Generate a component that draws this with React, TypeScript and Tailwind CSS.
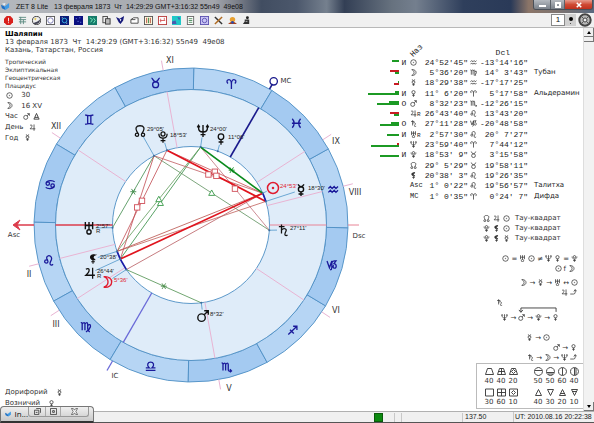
import type { ReactNode } from "react";

type GlyphName = keyof typeof glyphs;

const glyphs = {
  sun: (
    <>
      <circle cx="8" cy="8" r="6.3" />
      <circle cx="8" cy="8" r="0.6" />
    </>
  ),
  moon: <path d="M4 1.5C17 0 17 16 4 14.5C11 12 11 4 4 1.5z" />,
  mercury: (
    <>
      <circle cx="8" cy="7.2" r="3.2" />
      <path d="M4.3 1Q8 7 11.7 1M8 10.4V15.5M5 13h6" />
    </>
  ),
  venus: (
    <>
      <circle cx="8" cy="5" r="3.7" />
      <path d="M8 8.7V15.5M4.8 12h6.4" />
    </>
  ),
  mars: (
    <>
      <circle cx="6.2" cy="10" r="4.6" />
      <path d="M9.5 6.5L14.5 1.5M9.5 1.5h5v5" />
    </>
  ),
  jupiter: <path d="M2.5 3C7 0 9.5 5 2.5 11H14.5M11.5 1V15.5" />,
  saturn: <path d="M6 0.5V12.5M2.5 3.5h7.5M6 8C9 4.5 13.5 6.5 12 9.5C11 12 9.5 13 11 15Q12.5 16 14 14.5" />,
  uranus: (
    <>
      <path d="M3.5 0.5V9.5M12.5 0.5V9.5M3.5 5H12.5M8 0.5V10" />
      <circle cx="8" cy="12.8" r="2.6" />
    </>
  ),
  neptune: <path d="M2.5 2V4C2.5 11 13.5 11 13.5 4V2M1 3.5L2.5 1L4 3.5M12 3.5L13.5 1L15 3.5M8 0.5V15.5M5 12.5H11" />,
  pluto: (
    <>
      <circle cx="8" cy="4" r="2.7" />
      <path d="M2.5 3.5C2.5 11.5 13.5 11.5 13.5 3.5M8 9.5V15.5M4.8 12.7h6.4" />
    </>
  ),
  node: (
    <>
      <circle cx="4" cy="13" r="2.2" />
      <circle cx="12" cy="13" r="2.2" />
      <path d="M5.3 11C0.5 4 3 1 8 1C13 1 15.5 4 10.7 11" />
    </>
  ),
  lilith: (
    <>
      <path fill="currentColor" d="M11.5 1.5C1.5 -0.5 1.5 11 11.5 9C7 8 7 3 11.5 1.5z" />
      <path d="M8 9.5V15.5M5.2 12.5H11" />
    </>
  ),
  aries: <path d="M3 7C0 4 2 1.5 4.5 1.5C7 1.5 8 5 8 8V15M13 7C16 4 14 1.5 11.5 1.5C9 1.5 8 5 8 8" />,
  taurus: (
    <>
      <circle cx="8" cy="10.7" r="4.3" />
      <path d="M2 1C4.5 1.5 4 6.4 8 6.4C12 6.4 11.5 1.5 14 1" />
    </>
  ),
  gemini: <path d="M2 1Q8 3.5 14 1M2 15Q8 12.5 14 15M5.7 2V14M10.3 2V14" />,
  cancer: (
    <>
      <circle cx="4.5" cy="6.5" r="2.5" />
      <circle cx="11.5" cy="9.5" r="2.5" />
      <path d="M2.3 5.5C4 1 12 1.5 14.5 4M13.7 10.5C12 15 4 14.5 1.5 12" />
    </>
  ),
  leo: (
    <>
      <circle cx="4.3" cy="9.5" r="2.4" />
      <path d="M6.2 8C1 0 12 -1 12 5C12 9 8 11 10 14Q12 16 14 13.5" />
    </>
  ),
  virgo: <path d="M1 2Q3 1.5 3 4V13M3 4Q6.5 0 7 4V13M7 4Q10.5 0 11 4V11Q11 14 14 15.5M11 6Q15.5 3 15 8Q14 12 8.5 15.5" />,
  libra: <path d="M1 14.5H15M1 11H6.2C1.5 7 4 2.5 8 2.5C12 2.5 14.5 7 9.8 11H15" />,
  scorpio: <path d="M1 2Q3 1.5 3 4V13M3 4Q6 0 6.8 4V13M6.8 4Q10 0 10.6 4V12Q11 14.5 15 13.5M13 11L15.3 13.5L13 15.5" />,
  sagittarius: <path d="M1.5 14L14 2M8.5 2H14V7.5M4 7L9.5 12.5" />,
  capricorn: <path d="M1 1.5L4.5 11.5L8 1.5V11Q8 14 5.5 14.5M8 4Q9 1.5 12 1.5H14L11 5.5C15.5 6 15 12 12 12C9.5 12 9 9 11 8" />,
  aquarius: <path d="M1 6.5L4 3.5L6.5 6.5L9.5 3.5L12 6.5L15 3.5M1 12L4 9L6.5 12L9.5 9L12 12L15 9" />,
  pisces: <path d="M2 1.5Q7.5 8 2 14.5M14 1.5Q8.5 8 14 14.5M1.5 8H14.5" />,
  // arrow that turns up to the row above
  turn: <path d="M0.5 11.500H8Q12 11.500 12 7V1.500M8.500 5.500L12 1.500L15.500 5.500" />,
};

function Glyph({ name, className = "" }: { name: GlyphName; className?: string }) {
  return (
    <svg
      viewBox="0 0 16 16"
      className={`size-[7px] shrink-0 text-[#333] ${className}`}
      fill="none"
      stroke="currentColor"
      strokeWidth="1.7"
    >
      {glyphs[name]}
    </svg>
  );
}

/* ---------- chart ---------- */

const CX = 191;
const CY = 225;
const R_OUT = 157;
const R_BAND = 135.5;
const R_IN = 78.5;
const ASC = 121.006;

// ecliptic longitude -> point on a circle, ascendant on the left
function at(lon: number, r: number) {
  const a = ((180 + lon - ASC) * Math.PI) / 180;
  return { x: CX + r * Math.cos(a), y: CY - r * Math.sin(a) };
}

const signs: GlyphName[] = [
  "aries",
  "taurus",
  "gemini",
  "cancer",
  "leo",
  "virgo",
  "libra",
  "scorpio",
  "sagittarius",
  "capricorn",
  "aquarius",
  "pisces",
];

type Planet = { lon: number; x: number; y: number; deg?: string; retro?: boolean; red?: boolean; size?: number };

const planets: Partial<Record<GlyphName, Planet>> = {
  node: { lon: 59.09, x: 140, y: 131, deg: "29°05'" },
  pluto: { lon: 48.88, x: 163, y: 137, deg: "18°53'", size: 12 },
  neptune: { lon: 23.99, x: 203, y: 131, deg: "24°00'", size: 13 },
  venus: { lon: 11.1, x: 221, y: 139, deg: "11°06'" },
  sun: { lon: 324.88, x: 273, y: 188, deg: "24°53'", red: true, size: 14 },
  mercury: { lon: 318.49, x: 301, y: 190, deg: "18°30'", size: 13 },
  saturn: { lon: 297.19, x: 283, y: 230, deg: "27°11'", size: 12 },
  uranus: { lon: 122.96, x: 89, y: 228, deg: "2°57'", retro: true, size: 13 },
  lilith: { lon: 140.63, x: 93, y: 259, deg: "20°38'", size: 10 },
  jupiter: { lon: 146.73, x: 90, y: 273, deg: "26°44'", retro: true, size: 12 },
  moon: { lon: 155.6, x: 107, y: 282, deg: "5°36'", red: true, size: 13 },
  mars: { lon: 218.54, x: 203, y: 316, deg: "8°32'", size: 13 },
};

type Mark = "square" | "trine" | "sextile";

const aspects: [GlyphName, GlyphName, string, number, Mark?][] = [
  ["node", "uranus", "#3f8a4a", 1, "sextile"],
  ["neptune", "jupiter", "#2f8a3f", 1, "trine"],
  ["neptune", "lilith", "#5f9a5a", 1, "trine"],
  ["node", "saturn", "#5c8f5c", 1, "trine"],
  ["moon", "mars", "#4c8f4c", 1, "sextile"],
  ["neptune", "saturn", "#c0707a", 1, "square"],
  ["node", "jupiter", "#c04a50", 1, "square"],
  ["pluto", "lilith", "#c04a50", 1, "square"],
  ["node", "sun", "#c05a60", 1, "square"],
  ["pluto", "sun", "#c84a50", 1, "square"],
  ["lilith", "sun", "#b8504a", 1],
  ["lilith", "mercury", "#c0605a", 1],
  ["moon", "sun", "#b85a60", 1],
  ["neptune", "sun", "#0a8a1c", 2, "sextile"],
  ["pluto", "mercury", "#e0141e", 2, "square"],
  ["jupiter", "sun", "#e0141e", 2],
  ["lilith", "jupiter", "#1c1ca8", 2],
  ["jupiter", "moon", "#1c1ca8", 2],
  ["sun", "mercury", "#1c1ca8", 2],
];

const cusps = [
  { lon: 87.4, label: "XII", x: 56, y: 129 },
  { lon: 41.2, label: "XI", x: 170, y: 63 },
  { lon: 333.9, label: "IX", x: 336, y: 144 },
  { lon: 315.3, label: "VIII", x: 355, y: 195 },
  { lon: 267.4, label: "VI", x: 336, y: 313 },
  { lon: 221.2, label: "V", x: 229, y: 391 },
  { lon: 153.9, label: "III", x: 56, y: 327 },
  { lon: 135.3, label: "II", x: 29, y: 277 },
];

function sector(from: number) {
  const a = at(from, R_OUT);
  const b = at(from + 30, R_OUT);
  const c = at(from + 30, R_BAND);
  const d = at(from, R_BAND);
  return `M${a.x} ${a.y}A${R_OUT} ${R_OUT} 0 0 0 ${b.x} ${b.y}L${c.x} ${c.y}A${R_BAND} ${R_BAND} 0 0 1 ${d.x} ${d.y}z`;
}

function Ray({ lon, from, to, color, width = 1 }: { lon: number; from: number; to: number; color: string; width?: number }) {
  const a = at(lon, from);
  const b = at(lon, to);
  return <line x1={a.x} y1={a.y} x2={b.x} y2={b.y} stroke={color} strokeWidth={width} />;
}

function AspectMark({ kind, x, y, color }: { kind: Mark; x: number; y: number; color: string }) {
  if (kind === "square") {
    return <rect x={x - 2.7} y={y - 2.7} width="5.4" height="5.4" fill="#fff" stroke="#d0505a" strokeWidth="0.9" />;
  }
  if (kind === "trine") {
    return <path d={`M${x} ${y - 3}l3 5.4h-6z`} fill="#fff" stroke="#3a9a4a" strokeWidth="0.9" />;
  }
  return (
    <path
      d={`M${x - 3} ${y}h6M${x - 1.8} ${y - 2.8}l3.6 5.6M${x + 1.8} ${y - 2.8}l-3.6 5.6`}
      stroke={color}
      strokeWidth="0.9"
    />
  );
}

function NatalChart() {
  return (
    <svg
      role="img"
      aria-label="Шаляпин"
      viewBox="5 54 363 340"
      className="col-start-1 row-start-1 h-[340px] w-[363px] font-['DejaVu_Sans']"
      fill="none"
    >
      {signs.map((sign, i) => (
        <path key={sign} d={sector(i * 30)} fill={i % 2 ? "#a4caf1" : "#b6d5f4"} stroke="#4d8fc4" strokeWidth="0.9" />
      ))}
      <circle cx={CX} cy={CY} r={R_BAND} fill="#dfecf9" stroke="#4d8fc4" strokeWidth="0.9" />
      <circle cx={CX} cy={CY} r={R_IN} fill="#fff" stroke="#4d8fc4" strokeWidth="0.9" />

      {cusps.map(({ lon, label, x, y }) => (
        <g key={label}>
          <Ray lon={lon} from={R_IN} to={R_BAND} color="#e9b4d3" />
          <Ray lon={lon} from={R_OUT} to={167} color="#e9b4d3" />
          <text x={x} y={y} fontSize="8" textAnchor="middle" fill="#333">
            {label}
          </text>
        </g>
      ))}

      <path d="M14 225H34M55.5 225H112.5" stroke="#dc3c4c" strokeWidth="1.6" />
      <path d="M20 220L13 225L20 230L17 225z" fill="#dc3c4c" stroke="#dc3c4c" />
      <path d="M269.5 225H326.5M348 225H359" stroke="#e88496" strokeWidth="1" />
      <Ray lon={1.01} from={R_IN} to={R_BAND} color="#1a1a8c" width={1.6} />
      <Ray lon={1.01} from={R_OUT} to={163} color="#1a1a8c" width={1.6} />
      <circle cx="273.7" cy="81.3" r="3.7" stroke="#1a1a8c" strokeWidth="1.3" />
      <Ray lon={181.01} from={R_IN} to={R_BAND} color="#6a6ad8" width={1.3} />
      <Ray lon={181.01} from={R_OUT} to={168} color="#6a6ad8" width={1.3} />
      <g fontSize="7" fill="#333" textAnchor="middle">
        <text x="14" y="237">Asc</text>
        <text x="359" y="238">Dsc</text>
        <text x="286" y="83">MC</text>
        <text x="115" y="378">IC</text>
      </g>

      {signs.map((sign, i) => {
        const p = at(i * 30 + 15, 146.5);
        return (
          <g
            key={sign}
            transform={`translate(${p.x - 5.5} ${p.y - 5.5}) scale(0.69)`}
            stroke="#1a1a9a"
            strokeWidth="1.9"
          >
            {glyphs[sign]}
          </g>
        );
      })}

      {aspects.map(([from, to, color, width]) => {
        const a = at(planets[from]!.lon, R_IN);
        const b = at(planets[to]!.lon, R_IN);
        return (
          <line key={`${from}-${to}`} x1={a.x} y1={a.y} x2={b.x} y2={b.y} stroke={color} strokeWidth={width === 2 ? 1.7 : 0.8} />
        );
      })}
      {aspects.map(([from, to, color, , mark]) => {
        const a = at(planets[from]!.lon, R_IN);
        const b = at(planets[to]!.lon, R_IN);
        return mark && <AspectMark key={`${from}-${to}`} kind={mark} x={(a.x + b.x) / 2} y={(a.y + b.y) / 2} color={color} />;
      })}

      {Object.entries(planets).map(([name, p]) => {
        const a = at(p.lon, R_IN);
        const size = p.size ?? 12;
        const d = Math.hypot(p.x - a.x, p.y - a.y);
        const k = Math.max(0, (d - size / 2) / d);
        return (
          <g key={name}>
            <line x1={a.x} y1={a.y} x2={a.x + (p.x - a.x) * k} y2={a.y + (p.y - a.y) * k} stroke="#5f9fcf" strokeWidth="0.9" />
            <circle cx={a.x} cy={a.y} r="1" fill="#3b6ea0" />
            <g
              transform={`translate(${p.x - size / 2} ${p.y - size / 2}) scale(${size / 16})`}
              color={p.red ? "#e01c30" : "#111"}
              stroke="currentColor"
              strokeWidth="1.7"
            >
              {glyphs[name as GlyphName]}
            </g>
            <text x={p.x + 7} y={p.y} fontSize="6" className="font-['Liberation_Sans']" fill={p.red ? "#e01c30" : "#222"}>
              {p.deg}
            </text>
            {p.retro && (
              <text x={p.x + 7} y={p.y + 5} fontSize="6" className="font-['Liberation_Sans']" fill="#222">
                R
              </text>
            )}
          </g>
        );
      })}
    </svg>
  );
}

/* ---------- window chrome ---------- */

function TitleBar() {
  return (
    <header className="flex h-[13px] shrink-0 items-start bg-[linear-gradient(90deg,#b4b8bd_0%,#a2a5ab_36%,#7b7f89_40%,#414d61_44%,#4c586c_50%,#75808e_55%,#333f55_58%,#67727f_66%,#747f8e_70%,#2f3f5c_78%,#2a3a58_86%,#8b7568_89%,#7d7370_94%,#59697f_100%)] pr-px">
      <svg viewBox="0 0 10 10" className="mt-[2px] ml-px size-[9px] shrink-0">
        <path d="M0 3L4 5L5 9L1 7z" fill="#1d6fc4" />
        <path d="M4 5L9 1L9 6L5 9z" fill="#3f9be6" />
        <path d="M1 2L5 1L4 4z" fill="#e8f4ff" />
      </svg>
      <h1 className="ml-[6px] flex-1 whitespace-pre font-['Liberation_Sans',sans-serif] text-[7px] leading-[13px] text-[#111]">
        {"ZET 8 Lite   13 февраля 1873  Чт  14:29:29 GMT+3:16:32 55n49  49e08"}
      </h1>
      <div className="flex h-[10px] overflow-hidden rounded-b-[3px] border border-t-0 border-[#4a5058]">
        <button aria-label="Свернуть" className="flex w-[16px] items-end justify-center bg-gradient-to-b from-[#b5bac0] to-[#7b828b] pb-[2px]">
          <span className="h-[2px] w-[7px] bg-white" />
        </button>
        <button aria-label="Развернуть" className="flex w-[15px] items-center justify-center border-x border-[#5a6068] bg-gradient-to-b from-[#b5bac0] to-[#7b828b]">
          <span className="size-[6px] border-[2px] border-white" />
        </button>
        <button aria-label="Закрыть" className="flex w-[27px] items-center justify-center bg-gradient-to-b from-[#e59a8c] via-[#cf4a34] to-[#c0301c]">
          <svg viewBox="0 0 8 8" className="size-[6px]">
            <path d="M1 1L7 7M7 1L1 7" stroke="#fff" strokeWidth="2" />
          </svg>
        </button>
      </div>
    </header>
  );
}

const tools: { name: string; icon: ReactNode }[] = [
  { name: "Старт", icon: <><path d="M3 0H7L10 3V7L7 10H3L0 7V3z" fill="#d8201c" /><path d="M5 2V6M5 7V8" stroke="#fff" /></> },
  { name: "Список", icon: <path d="M1 1.5H9M1 4H9M1 6.5H9M3 1V9M6 4V9" stroke="#5b8a80" /> },
  { name: "Глобус", icon: <><circle cx="5" cy="5" r="4.5" fill="#eee" stroke="#333" /><path d="M1 8C4 10 9 9 9 4L6 6z" fill="#445" /><path d="M2 3L5 2L4 5z" fill="#e6c84a" /></> },
  { name: "Круг", icon: <><rect x="0.5" y="0.5" width="9" height="9" fill="#fff" stroke="#555" /><circle cx="5" cy="5" r="3" fill="none" stroke="#7777b0" /></> },
  { name: "Небо", icon: <><rect width="10" height="10" fill="#0a1c78" /><circle cx="5" cy="5" r="2.5" fill="none" stroke="#39b8e8" /><path d="M2 2h1M7 8h1" stroke="#fff" /></> },
  { name: "Звёзды", icon: <><rect width="10" height="10" fill="#0a0f80" /><path d="M2 3h1M6 2h1M4 6h1M7 7h1" stroke="#8ea8ff" /></> },
  { name: "Карта", icon: <><rect width="10" height="10" fill="#167a6a" /><path d="M2 2L5 4L3 7M6 2L8 5L6 8" stroke="#7af0c0" fill="none" /></> },
  { name: "Копия", icon: <><rect x="1" y="0.5" width="5" height="7" fill="#eee" stroke="#444" /><rect x="4" y="3" width="5" height="6" fill="#bbb" stroke="#333" /></> },
  { name: "Птица", icon: <><path d="M0 1L4 3L9 0L8 5L5 9L3 7z" fill="#15187a" /><path d="M4 3L6 4L5 6z" fill="#fff" /></> },
  { name: "Окно", icon: <path d="M1 4L4 2H9V8H1z M1 4H6" fill="#fff" stroke="#444" /> },
  { name: "Таблица", icon: <><rect x="0.5" y="0.5" width="9" height="9" fill="#fffbe0" stroke="#555" /><path d="M3 2V8M7 2V8" stroke="#b04030" /><path d="M5 2V8" stroke="#3a8a4a" /></> },
  { name: "График", icon: <><rect x="0.5" y="0.5" width="9" height="9" fill="#fff" stroke="#b83a3a" /><path d="M2 5H8M3 3V7M7 2V5" stroke="#d85a5a" /></> },
  { name: "Регионы", icon: <><rect width="10" height="10" fill="#20c8c8" /><path d="M0 6L4 5L5 9H0zM6 1L9 2L8 5z" fill="#4a5ab0" /></> },
  { name: "Текст", icon: <><rect x="1.5" y="0.5" width="7" height="9" fill="#fff" stroke="#666" /><path d="M3 3H7M3 5H7M3 7H7" stroke="#4a8a5a" /></> },
  { name: "Сетка", icon: <><rect x="0.5" y="0.5" width="9" height="9" fill="#c8c4f4" stroke="#5a50b0" /><circle cx="5" cy="5" r="2.5" fill="none" stroke="#5a50b0" /></> },
  { name: "Настройки", icon: <><path d="M1 1L9 9" stroke="#333" strokeWidth="1.6" /><path d="M9 1L1 9" stroke="#b06a20" strokeWidth="1.6" /></> },
  { name: "Лицо", icon: <><circle cx="5" cy="4" r="3" fill="#e8a030" /><path d="M0 9Q5 4 10 9z" fill="#a8401c" /><circle cx="5" cy="7" r="1.5" fill="#2a4ab0" /></> },
  { name: "Помощь", icon: <><circle cx="6" cy="2" r="1.6" fill="#222" /><path d="M3 4H8V9H1L3 6z" fill="#333" /><path d="M4 6H6" stroke="#bbb" /></> },
];

function Toolbar() {
  return (
    <div className="flex h-[15px] shrink-0 items-center border-b border-[#b8b8b8] bg-[#f0f0f0] pl-px">
      {tools.map(({ name, icon }) => (
        <button key={name} aria-label={name} className="flex w-[14px] justify-center">
          <svg viewBox="0 0 10 10" className="size-[9px]">
            {icon}
          </svg>
        </button>
      ))}
      <div className="ml-auto flex items-center">
        <input
          aria-label="Номер"
          defaultValue="1"
          className="h-[12px] w-[14px] border border-[#888] bg-white text-center font-['Liberation_Sans'] text-[8px] text-[#111]"
        />
        <button aria-label="Больше" className="flex h-[12px] w-[11px] flex-col items-center justify-center gap-[2px] bg-[#d0d0d0]">
          <span className="size-[4px] rounded-full bg-black" />
          <span className="size-px bg-[#555]" />
        </button>
        <button aria-label="Колесо" className="ml-[2px] mr-[2px]">
          <svg viewBox="0 0 14 14" className="size-[14px]">
            <circle cx="7" cy="7" r="5.7" fill="#b8b8b8" stroke="#444" strokeWidth="2" />
            <circle cx="7" cy="7" r="2" fill="#eee" stroke="#444" />
            <path d="M3 3L5.5 5.5M11 3L8.5 5.5M3 11L5.5 8.5M11 11L8.5 8.5" stroke="#555" />
          </svg>
        </button>
      </div>
    </div>
  );
}

function ScrollBar() {
  return (
    <div className="flex w-[11px] shrink-0 flex-col border-l border-[#ddd] bg-[#f2f2f2]">
      <button aria-label="Вверх" className="flex h-[9px] items-center justify-center border-r border-b border-[#777] bg-[#f0f0f0]">
        <span className="border-x-[2px] border-b-[3px] border-x-transparent border-b-black" />
      </button>
      <div className="h-[5px] border-r border-b border-[#777] bg-[#f0f0f0]" />
      <button aria-label="Вниз" className="mt-auto flex h-[9px] items-center justify-center border-r border-b border-[#777] bg-[#f0f0f0]">
        <span className="border-x-[2px] border-t-[3px] border-x-transparent border-t-black" />
      </button>
    </div>
  );
}

/* ---------- left text ---------- */

function ChartInfo() {
  return (
    <aside className="col-start-1 row-start-1 flex flex-col items-start pt-[4px] pb-[2px] text-[#333]">
      <ul className="text-[6px] leading-[8px]">
        <li>Тропический</li>
        <li>Эклиптикальная</li>
        <li>Геоцентрическая</li>
        <li>Плацидус</li>
      </ul>
      <ul className="grid h-[53px] grid-rows-5 text-[7px] leading-[10px]">
        <li className="flex items-center gap-[6px]"><Glyph name="sun" className="ml-px" /> 30</li>
        <li className="flex items-center gap-[6px]"><Glyph name="moon" className="ml-px" /> 16 XV</li>
        <li className="flex items-center gap-[3px]">
          Час <Glyph name="mars" />
          <svg viewBox="0 0 8 8" className="size-[7px]" fill="none" stroke="#333">
            <path d="M4 0.5L6 5H2zM1 7H7M2 5L1 7M6 5L7 7" />
          </svg>
        </li>
        <li className="flex items-center gap-[3px]">День <Glyph name="jupiter" /></li>
        <li className="flex items-center gap-[3px]">Год <Glyph name="mercury" /></li>
      </ul>
      <ul className="mt-auto text-[7px] leading-[11px]">
        <li className="flex items-center gap-[6px]">Дорифорий <Glyph name="mercury" /></li>
        <li className="flex items-center gap-[6px]">Возничий <Glyph name="venus" /></li>
      </ul>
    </aside>
  );
}

/* ---------- right text ---------- */

type Bar = [width: number, color: "g" | "r"];
type Row = {
  body: GlyphName | "Asc" | "MC";
  bars?: [Bar, Bar];
  flag?: string;
  retro?: boolean;
  lon: string;
  sign: GlyphName;
  dcl: string;
  star?: string;
};

const rows: Row[] = [
  { body: "sun", bars: [[7, "g"], [0, "g"]], flag: "И", lon: "24°52'45\"", sign: "aquarius", dcl: "-13°14'16\"" },
  { body: "moon", bars: [[9, "r"], [4, "g"]], lon: "5°36'20\"", sign: "virgo", dcl: "14° 3'43\"", star: "Тубан" },
  { body: "mercury", bars: [[1, "g"], [5, "r"]], lon: "18°29'38\"", sign: "aquarius", dcl: "-17°17'25\"" },
  { body: "venus", bars: [[4, "g"], [31, "g"]], flag: "И", lon: "11° 6'20\"", sign: "aries", dcl: "5°17'58\"", star: "Альдерамин" },
  { body: "mars", bars: [[10, "g"], [22, "g"]], flag: "О", lon: "8°32'23\"", sign: "scorpio", dcl: "-12°26'15\"" },
  { body: "jupiter", bars: [[9, "r"], [5, "g"]], retro: true, lon: "26°43'40\"", sign: "leo", dcl: "13°43'20\"" },
  { body: "saturn", bars: [[8, "g"], [19, "g"]], flag: "О", lon: "27°11'28\"", sign: "capricorn", dcl: "-20°48'58\"" },
  { body: "uranus", bars: [[0, "g"], [12, "g"]], flag: "И", retro: true, lon: "2°57'30\"", sign: "leo", dcl: "20° 7'27\"" },
  { body: "neptune", bars: [[2, "r"], [28, "g"]], lon: "23°59'40\"", sign: "aries", dcl: "7°44'12\"" },
  { body: "pluto", bars: [[0, "g"], [19, "g"]], flag: "И", lon: "18°53' 9\"", sign: "taurus", dcl: "3°15'58\"" },
  { body: "node", lon: "29° 5'29\"", sign: "taurus", dcl: "19°58'11\"" },
  { body: "lilith", lon: "20°38' 3\"", sign: "leo", dcl: "19°26'35\"" },
  { body: "Asc", lon: "1° 0'22\"", sign: "leo", dcl: "19°56'57\"", star: "Талитха" },
  { body: "MC", lon: "1° 0'35\"", sign: "aries", dcl: "0°24' 7\"", star: "Дифда" },
];

function Positions() {
  return (
    <table className="h-[162px] w-full table-fixed border-collapse whitespace-pre font-['Liberation_Mono',monospace] text-[8px] leading-[9px] text-[#222]">
      <colgroup>
        <col className="w-[35px]" />
        <col className="w-[10px]" />
        <col className="w-[13px]" />
        <col className="w-[46px]" />
        <col className="w-[10px]" />
        <col className="w-[50px]" />
        <col />
      </colgroup>
      <thead>
        <tr className="h-[14px]">
          <th />
          <th />
          <th className="p-0 text-left font-normal">
            <span className="inline-block -rotate-45">Наз</span>
          </th>
          <th />
          <th />
          <th className="p-0 pr-[18px] text-right align-bottom font-normal">Dcl</th>
          <th />
        </tr>
      </thead>
      <tbody>
        {rows.map((row) => (
          <tr key={row.body}>
            <td className="p-0">
              <div className="flex flex-col items-end">
                {row.bars?.map(([width, color], i) => (
                  <span key={i} className={`h-[2px] ${color === "g" ? "bg-[#1c9a24]" : "bg-[#c81c24]"}`} style={{ width }} />
                ))}
              </div>
            </td>
            <td className="p-0 text-center">{row.flag}</td>
            <td className="p-0">
              <div className="flex items-center pl-px">
                {row.body === "Asc" || row.body === "MC" ? (
                  <span className="text-[7px]">{row.body}</span>
                ) : (
                  <Glyph name={row.body} />
                )}
                {row.retro && <span className="self-end pt-[3px] text-[6px] leading-[6px]">R</span>}
              </div>
            </td>
            <td className="p-0 text-right">{row.lon}</td>
            <td className="p-0 pl-[2px]">
              <Glyph name={row.sign} />
            </td>
            <td className="p-0 text-right">{row.dcl}</td>
            <td className="p-0 pl-[6px] font-['DejaVu_Sans'] text-[7px]">{row.star}</td>
          </tr>
        ))}
      </tbody>
    </table>
  );
}

// a row of planet glyphs joined by plain signs
function Chain({ items, className = "" }: { items: string[]; className?: string }) {
  return (
    <div className={`flex h-[10px] items-center justify-end gap-[2px] ${className}`}>
      {items.map((item, i) =>
        item in glyphs ? <Glyph key={i} name={item as GlyphName} /> : <span key={i}>{item}</span>,
      )}
    </div>
  );
}

function Tau({ items }: { items: GlyphName[] }) {
  return (
    <li className="flex items-center gap-[3px]">
      {items.map((item) => (
        <Glyph key={item} name={item} />
      ))}
      <span className="pl-[2px]">Тау-квадрат</span>
    </li>
  );
}

const house = "M2.5 1.5H6.5L8.5 7.5H0.5z";
const box = "M0.5 1H8.5V8H0.5z";
const round = "M4.5 0.5A4 4 0 1 1 4.4 0.5z";

const counts = [
  [
    { d: house, n: 40 },
    { d: house + "M4.5 1.5V7.5M1.5 4.5H7.5", n: 40 },
    { d: house + "M4.5 2.5L6.5 4.5L4.5 6.5L2.5 4.5z", n: 20 },
    { d: round + "M1 3.5H8", n: 50 },
    { d: round + "M1 5.5H8M2 7H7", n: 50 },
    { d: round + "M4.5 1V8", n: 60 },
    { d: round + "M4.5 1V8M6 1V8", n: 40 },
  ],
  [
    { d: box, n: 30 },
    { d: box + "M4.5 1V8M0.5 4.5H8.5", n: 60 },
    { d: box + "M2.5 4.5L4.5 2.5L6.5 4.5L4.5 6.5z", n: 10 },
    { d: "M4.5 1.5L7.5 7.5H1.5z", n: 40 },
    { d: "M4.5 7.5L7.5 1.5H1.5z", n: 30 },
    { d: "M4.5 1.5L7.5 7.5H1.5zM2.5 5.5H6.5", n: 20 },
    { d: "M4.5 7.5L7.5 1.5H1.5zM2.5 3.5H6.5", n: 10 },
  ],
];

function Counts() {
  return (
    <div className="mt-auto mb-[2px] flex w-[107px] flex-col gap-[2px] self-end overflow-hidden border border-r-0 border-[#bbb] bg-white pt-[3px] pb-[2px] pl-[6px]">
      {counts.map((line, i) => (
        <div key={i} className="flex">
          {line.map(({ d, n }, j) => (
            <div key={j} className={`flex w-[12px] shrink-0 flex-col items-center ${j === 3 ? "ml-[13px]" : ""}`}>
              <svg viewBox="0 0 9 9" className="size-[9px]" fill="none" stroke="#333" strokeWidth="0.9">
                <path d={d} />
              </svg>
              <span className="leading-[10px]">{n}</span>
            </div>
          ))}
        </div>
      ))}
    </div>
  );
}

function SidePanel() {
  return (
    <section className="ml-auto flex w-[219px] shrink-0 flex-col pt-[15px] font-['DejaVu_Sans'] text-[7px] leading-[10px] text-[#333]">
      <Positions />
      <ul className="mt-[12px] grid h-[31px] grid-rows-3 pl-[119px]">
        <Tau items={["node", "jupiter", "sun"]} />
        <Tau items={["pluto", "lilith", "sun"]} />
        <Tau items={["pluto", "lilith", "mercury"]} />
      </ul>
      <Chain className="mt-[10px] pr-[5px]" items={["sun", "=", "uranus", "sun", "≠", "neptune", "venus", "=", "pluto"]} />
      <Chain className="pr-[8px]" items={["sun", "f", "moon"]} />
      <Chain className="mt-[4px] pr-[5px]" items={["moon", "→", "mercury", "→", "uranus", "↔", "sun"]} />
      <Chain className="pr-[6px]" items={["jupiter", "turn"]} />
      <Chain className="pr-[80px]" items={["saturn"]} />
      <svg viewBox="0 0 40 6" className="mr-[25px] h-[6px] w-[40px] self-end" fill="none" stroke="#333" strokeWidth="0.9">
        <path d="M38.5 5V1H2.5V5M0.5 3L2.5 5.5L4.5 3" />
      </svg>
      <Chain className="pr-[24px]" items={["neptune", "→", "mars", "→", "pluto", "→", "venus"]} />
      <Chain className="mt-[10px] pr-[33px]" items={["mercury", "→", "sun"]} />
      <Chain className="pr-[6px]" items={["mars", "→", "venus"]} />
      <Chain className="pr-[6px]" items={["saturn", "→", "moon", "→", "neptune", "turn"]} />
      <Counts />
    </section>
  );
}

function StatusBar() {
  return (
    <footer className="flex h-[12px] shrink-0 items-center border-t border-b border-t-[#b0b0b0] border-b-[#555] bg-[#f0f0f0] whitespace-nowrap font-['Liberation_Sans',sans-serif] text-[7px] leading-[10px] text-[#222]">
      <span className="ml-auto mr-[2px] size-[9px] border border-[#0a5a0a] bg-[#0c8a10]" />
      <span className="h-[9px] w-[10px] border-r border-[#c8c8c8]" />
      <span className="h-[9px] w-[7px] border-r border-[#c8c8c8]" />
      <span className="h-[9px] w-[61px] border-r border-[#c8c8c8]" />
      <span className="w-[51px] border-r border-[#c8c8c8] pl-[2px]">137.50</span>
      <span className="w-[80px] pl-px">UT: 2010.08.16 20:22:38</span>
    </footer>
  );
}

function MinimizedWindow() {
  return (
    <div className="absolute bottom-0 left-0 flex h-[17px] w-[94px] items-start rounded-t-[4px] border border-b-2 border-[#777] border-b-[#333] bg-gradient-to-b from-[#f0f0f0] to-[#c9c9c9] pl-[4px]">
      <svg viewBox="0 0 10 10" className="mt-[3px] size-[8px]">
        <path d="M0 3L4 5L5 9L1 7z" fill="#1d6fc4" />
        <path d="M4 5L9 1L9 6L5 9z" fill="#3f9be6" />
      </svg>
      <span className="ml-[3px] flex-1 font-['Open_Sans'] text-[8px] leading-[14px] text-[#111]">In...</span>
      <div className="mr-[4px] flex h-[10px] rounded-b-[3px] border border-t-0 border-[#999]">
        <button aria-label="Восстановить" className="flex w-[16px] items-center justify-center">
          <svg viewBox="0 0 8 8" className="size-[7px]" fill="none" stroke="#444"><path d="M2.5 0.5H7.5V5.5M0.5 2.5H5.5V7.5H0.5zM2 5H4" /></svg>
        </button>
        <button aria-label="Развернуть окно" className="flex w-[16px] items-center justify-center border-x border-[#aaa]">
          <svg viewBox="0 0 8 8" className="size-[7px]" fill="none" stroke="#444"><path d="M0.5 0.5H7.5V7.5H0.5zM3 3H5V5H3z" /></svg>
        </button>
        <button aria-label="Закрыть окно" className="flex w-[27px] items-center justify-center">
          <svg viewBox="0 0 8 8" className="size-[7px]" fill="#fff" stroke="#444" strokeWidth="0.8"><path d="M0.5 0.5H2.5L4 2.5L5.5 0.5H7.5L5.5 4L7.5 7.5H5.5L4 5.5L2.5 7.5H0.5L2.5 4z" /></svg>
        </button>
      </div>
    </div>
  );
}

export default function App() {
  return (
    <div className="relative flex h-screen flex-col overflow-hidden bg-white font-['DejaVu_Sans',sans-serif]">
      <TitleBar />
      <Toolbar />
      <main className="flex min-h-0 flex-1">
        <div className="flex min-w-0 flex-1">
          <div className="flex w-0 flex-col pl-[5px] pt-[2px] whitespace-pre">
            <div className="text-[7px] leading-[8px] text-[#333]">
              <h2 className="font-bold text-black">Шаляпин</h2>
              <p>{"13 февраля 1873  Чт  14:29:29 (GMT+3:16:32) 55n49  49e08"}</p>
              <p>Казань, Татарстан, Россия</p>
            </div>
            <div className="grid flex-1 grid-cols-[363px]">
              <NatalChart />
              <ChartInfo />
            </div>
          </div>
          <SidePanel />
        </div>
        <ScrollBar />
      </main>
      <StatusBar />
      <MinimizedWindow />
    </div>
  );
}
